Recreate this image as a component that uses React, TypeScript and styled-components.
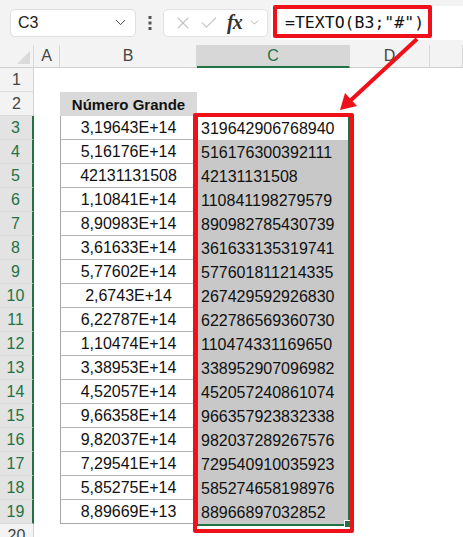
import React from 'react';
import styled, { createGlobalStyle } from 'styled-components';
import { ChevronDown, X, Check } from 'lucide-react';

const GlobalStyle = createGlobalStyle`
  * { box-sizing: border-box; }
  html, body { margin: 0; padding: 0; background: #ffffff; }
  body { font-family: "Liberation Sans", Arial, sans-serif; overflow: hidden; }
`;

const GREEN = '#217346';
const RED = '#f0101a';

const Page = styled.div`
  position: relative;
  width: 463px;
  height: 537px;
  overflow: hidden;
  background: #ffffff;
`;

/* formula bar */
const Toolbar = styled.div`
  height: 45px;
  background: #f3f3f3;
  display: flex;
  align-items: center;
  padding: 0 0 0 10px;
`;

const NameBox = styled.div`
  width: 126px;
  height: 28px;
  background: #fff;
  border: 1px solid #dedede;
  border-radius: 5px;
  display: flex;
  align-items: center;
  justify-content: space-between;
  padding: 0 6px 0 7px;
  font-size: 16px;
  color: #222;
`;

const Dots = styled.div`
  width: 27px;
  display: flex;
  justify-content: center;
`;

const FxBox = styled.div`
  width: 105px;
  height: 28px;
  background: #fff;
  border: 1px solid #e2e2e2;
  border-radius: 5px;
  display: flex;
  align-items: center;
  padding: 0 4px 0 9px;
  gap: 6px;
  color: #c4c4c4;
`;

const Fx = styled.span`
  font-family: "Liberation Serif", "DejaVu Serif", serif;
  font-style: italic;
  font-weight: bold;
  font-size: 20px;
  color: #333;
  margin-left: 2px;
  letter-spacing: -1px;
`;

const FormulaField = styled.div`
  flex: 1;
  height: 34px;
  margin-left: 3px;
  background: #fff;
  display: flex;
  align-items: center;
  padding-left: 14px;
  font-family: "DejaVu Sans Mono", "Liberation Mono", monospace;
  font-size: 16.5px;
  color: #111;
`;

/* sheet */
const Sheet = styled.div`
  display: grid;
  grid-template-columns: 34px 26px 137px 153px 80px 1fr;
  grid-template-rows: 23px;
  grid-auto-rows: 24px;
  font-size: 16px;
`;

const Corner = styled.div`
  background: #f3f3f3;
  border-right: 1px solid #d8d8d8;
  border-bottom: 1px solid #d0d0d0;
  position: relative;
  &::after {
    content: '';
    position: absolute;
    right: 3px;
    bottom: 3px;
    border-style: solid;
    border-width: 0 0 13px 13px;
    border-color: transparent transparent #dadada transparent;
  }
`;

const ColHead = styled.div<{ $active?: boolean }>`
  background: ${({ $active }) => ($active ? '#d7d7d7' : '#f3f3f3')};
  color: ${({ $active }) => ($active ? GREEN : '#444')};
  border-right: 1px solid #d8d8d8;
  border-bottom: ${({ $active }) => ($active ? `2px solid ${GREEN}` : '1px solid #d0d0d0')};
  display: flex;
  align-items: center;
  justify-content: center;
`;

const RowHead = styled.div<{ $active?: boolean }>`
  background: ${({ $active }) => ($active ? '#e3e3e3' : '#f3f3f3')};
  color: ${({ $active }) => ($active ? GREEN : '#444')};
  border-right: ${({ $active }) => ($active ? `2px solid ${GREEN}` : '1px solid #d0d0d0')};
  border-bottom: 1px solid #dadada;
  display: flex;
  align-items: center;
  justify-content: center;
  padding-right: ${({ $active }) => ($active ? '1px' : '0')};
`;

const Blank = styled.div``;

const BHeader = styled.div`
  background: #d9d9d9;
  font-weight: bold;
  font-size: 15px;
  display: flex;
  align-items: center;
  justify-content: center;
  color: #111;
`;

const BCell = styled.div<{ $last?: boolean }>`
  border-left: 1px solid #a6a6a6;
  border-right: 1px solid #a6a6a6;
  border-bottom: ${({ $last }) => ($last ? '1px solid #a6a6a6' : '1px solid #b4b4b4')};
  display: flex;
  align-items: center;
  justify-content: center;
  color: #111;
  padding-top: 1px;
`;

const CCell = styled.div<{ $active?: boolean }>`
  background: ${({ $active }) => ($active ? '#ffffff' : '#c8c8c8')};
  display: flex;
  align-items: center;
  padding: 1px 0 0 4px;
  color: #111;
`;

/* overlays: selection outline and red annotations */
const Selection = styled.div`
  position: absolute;
  left: 196px;
  top: 115px;
  width: 154px;
  height: 411px;
  border: 2px solid ${GREEN};
  &::after {
    content: '';
    position: absolute;
    right: -4px;
    bottom: -4px;
    width: 6px;
    height: 6px;
    background: ${GREEN};
    border: 1px solid #fff;
  }
`;

const RedBox = styled.div<{ $l: number; $t: number; $w: number; $h: number }>`
  position: absolute;
  left: ${({ $l }) => $l}px;
  top: ${({ $t }) => $t}px;
  width: ${({ $w }) => $w}px;
  height: ${({ $h }) => $h}px;
  border: 4px solid ${RED};
  border-radius: 2px;
  pointer-events: none;
`;

const Arrow = styled.svg`
  position: absolute;
  left: 0;
  top: 0;
  pointer-events: none;
`;

const bValues = [
  '3,19643E+14', '5,16176E+14', '42131131508', '1,10841E+14', '8,90983E+14',
  '3,61633E+14', '5,77602E+14', '2,6743E+14', '6,22787E+14', '1,10474E+14',
  '3,38953E+14', '4,52057E+14', '9,66358E+14', '9,82037E+14', '7,29541E+14',
  '5,85275E+14', '8,89669E+13',
];

const cValues = [
  '319642906768940', '516176300392111', '42131131508', '110841198279579', '890982785430739',
  '361633135319741', '577601811214335', '267429592926830', '622786569360730', '110474331169650',
  '338952907096982', '452057240861074', '966357923832338', '982037289267576', '729540910035923',
  '585274658198976', '88966897032852',
];

const App = () => {
  const rows: React.ReactNode[] = [];
  for (let r = 1; r <= 20; r++) {
    const i = r - 3;
    const inData = i >= 0 && i < bValues.length;
    rows.push(<RowHead key={`h${r}`} $active={inData}>{r}</RowHead>);
    rows.push(<Blank key={`a${r}`} />);
    if (r === 2) rows.push(<BHeader key={`b${r}`}>Número Grande</BHeader>);
    else if (inData) rows.push(<BCell key={`b${r}`} $last={i === bValues.length - 1}>{bValues[i]}</BCell>);
    else rows.push(<Blank key={`b${r}`} />);
    if (inData) rows.push(<CCell key={`c${r}`} $active={i === 0}>{cValues[i]}</CCell>);
    else rows.push(<Blank key={`c${r}`} />);
    rows.push(<Blank key={`d${r}`} />);
    rows.push(<Blank key={`e${r}`} />);
  }

  return (
    <Page>
      <GlobalStyle />
      <Toolbar>
        <NameBox>
          <span>C3</span>
          <ChevronDown size={17} strokeWidth={1.4} color="#444" />
        </NameBox>
        <Dots>
          <svg width="4" height="16" viewBox="0 0 4 16">
            <rect x="0.5" y="1" width="3" height="3" fill="#555" />
            <rect x="0.5" y="6.5" width="3" height="3" fill="#555" />
            <rect x="0.5" y="12" width="3" height="3" fill="#555" />
          </svg>
        </Dots>
        <FxBox>
          <X size={20} strokeWidth={1.3} />
          <Check size={20} strokeWidth={1.3} />
          <Fx>fx</Fx>
          <ChevronDown size={13} strokeWidth={1.4} color="#999" />
        </FxBox>
        <FormulaField>=TEXTO(B3;"#")</FormulaField>
      </Toolbar>
      <Sheet>
        <Corner />
        <ColHead>A</ColHead>
        <ColHead>B</ColHead>
        <ColHead $active>C</ColHead>
        <ColHead>D</ColHead>
        <ColHead />
        {rows}
      </Sheet>
      <Selection />
      <RedBox $l={273} $t={5} $w={159} $h={33} />
      <RedBox $l={193} $t={113} $w={161} $h={420} />
      <Arrow width="463" height="537">
        <line x1="417" y1="39" x2="350" y2="101" stroke={RED} strokeWidth="4" />
        <polygon points="340,110 345,93 357,106" fill={RED} />
      </Arrow>
    </Page>
  );
};

export default App;
